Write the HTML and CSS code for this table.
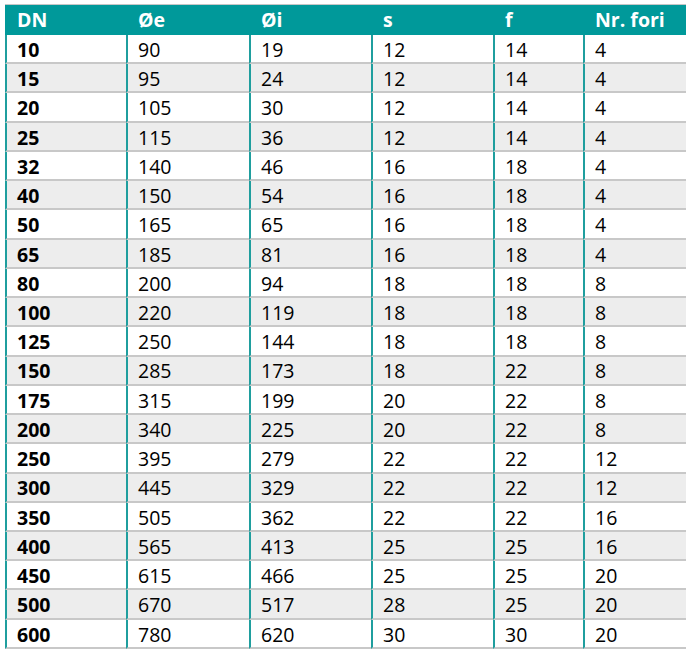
FILE: index.html
```html
<!DOCTYPE html>
<html lang="it">
<head>
<meta charset="utf-8">
<title>Tabella flange</title>
<link rel="stylesheet" href="styles.css">
</head>
<body>
<div class="tbl" role="table">
  <div class="row head" role="row"><div class="c">DN</div><div class="c">Øe</div><div class="c">Øi</div><div class="c">s</div><div class="c">f</div><div class="c">Nr. fori</div></div>
  <div class="row" role="row"><div class="c">10</div><div class="c">90</div><div class="c">19</div><div class="c">12</div><div class="c">14</div><div class="c">4</div></div>
  <div class="row alt" role="row"><div class="c">15</div><div class="c">95</div><div class="c">24</div><div class="c">12</div><div class="c">14</div><div class="c">4</div></div>
  <div class="row" role="row"><div class="c">20</div><div class="c">105</div><div class="c">30</div><div class="c">12</div><div class="c">14</div><div class="c">4</div></div>
  <div class="row alt" role="row"><div class="c">25</div><div class="c">115</div><div class="c">36</div><div class="c">12</div><div class="c">14</div><div class="c">4</div></div>
  <div class="row" role="row"><div class="c">32</div><div class="c">140</div><div class="c">46</div><div class="c">16</div><div class="c">18</div><div class="c">4</div></div>
  <div class="row alt" role="row"><div class="c">40</div><div class="c">150</div><div class="c">54</div><div class="c">16</div><div class="c">18</div><div class="c">4</div></div>
  <div class="row" role="row"><div class="c">50</div><div class="c">165</div><div class="c">65</div><div class="c">16</div><div class="c">18</div><div class="c">4</div></div>
  <div class="row alt" role="row"><div class="c">65</div><div class="c">185</div><div class="c">81</div><div class="c">16</div><div class="c">18</div><div class="c">4</div></div>
  <div class="row" role="row"><div class="c">80</div><div class="c">200</div><div class="c">94</div><div class="c">18</div><div class="c">18</div><div class="c">8</div></div>
  <div class="row alt" role="row"><div class="c">100</div><div class="c">220</div><div class="c">119</div><div class="c">18</div><div class="c">18</div><div class="c">8</div></div>
  <div class="row" role="row"><div class="c">125</div><div class="c">250</div><div class="c">144</div><div class="c">18</div><div class="c">18</div><div class="c">8</div></div>
  <div class="row alt" role="row"><div class="c">150</div><div class="c">285</div><div class="c">173</div><div class="c">18</div><div class="c">22</div><div class="c">8</div></div>
  <div class="row" role="row"><div class="c">175</div><div class="c">315</div><div class="c">199</div><div class="c">20</div><div class="c">22</div><div class="c">8</div></div>
  <div class="row alt" role="row"><div class="c">200</div><div class="c">340</div><div class="c">225</div><div class="c">20</div><div class="c">22</div><div class="c">8</div></div>
  <div class="row" role="row"><div class="c">250</div><div class="c">395</div><div class="c">279</div><div class="c">22</div><div class="c">22</div><div class="c">12</div></div>
  <div class="row alt" role="row"><div class="c">300</div><div class="c">445</div><div class="c">329</div><div class="c">22</div><div class="c">22</div><div class="c">12</div></div>
  <div class="row" role="row"><div class="c">350</div><div class="c">505</div><div class="c">362</div><div class="c">22</div><div class="c">22</div><div class="c">16</div></div>
  <div class="row alt" role="row"><div class="c">400</div><div class="c">565</div><div class="c">413</div><div class="c">25</div><div class="c">25</div><div class="c">16</div></div>
  <div class="row" role="row"><div class="c">450</div><div class="c">615</div><div class="c">466</div><div class="c">25</div><div class="c">25</div><div class="c">20</div></div>
  <div class="row alt" role="row"><div class="c">500</div><div class="c">670</div><div class="c">517</div><div class="c">28</div><div class="c">25</div><div class="c">20</div></div>
  <div class="row" role="row"><div class="c">600</div><div class="c">780</div><div class="c">620</div><div class="c">30</div><div class="c">30</div><div class="c">20</div></div>
</div>
</body>
</html>
```

FILE: styles.css
```css
html, body {
  margin: 0;
  padding: 0;
  background: #ffffff;
}

body {
  font-family: "Open Sans", "Liberation Sans", sans-serif;
  font-size: 19.5px;
  color: #000000;
}

.tbl {
  margin: 4px 0 0 5px;
  width: 681px;
  border-top: 1px solid #c6c6c6;
}

.row {
  display: grid;
  grid-template-columns: 121px 123px 122px 122px 90px 103px;
  height: 29.24px;
  background: #ffffff;
}

.row.alt {
  background: #ededed;
}

.row.head {
  height: 30px;
  background: #00999a;
  color: #ffffff;
  font-weight: 700;
}

.c {
  box-sizing: border-box;
  display: flex;
  align-items: center;
  padding: 2px 0 0 10px;
  border-left: 2px solid #1f9e9e;
  border-bottom: 2px solid #c8c8c8;
  line-height: 1;
  white-space: nowrap;
}

.c:first-child {
  font-weight: 700;
}

.head .c {
  border-left-color: #00999a;
  border-bottom: none;
  padding-top: 0;
}
```
